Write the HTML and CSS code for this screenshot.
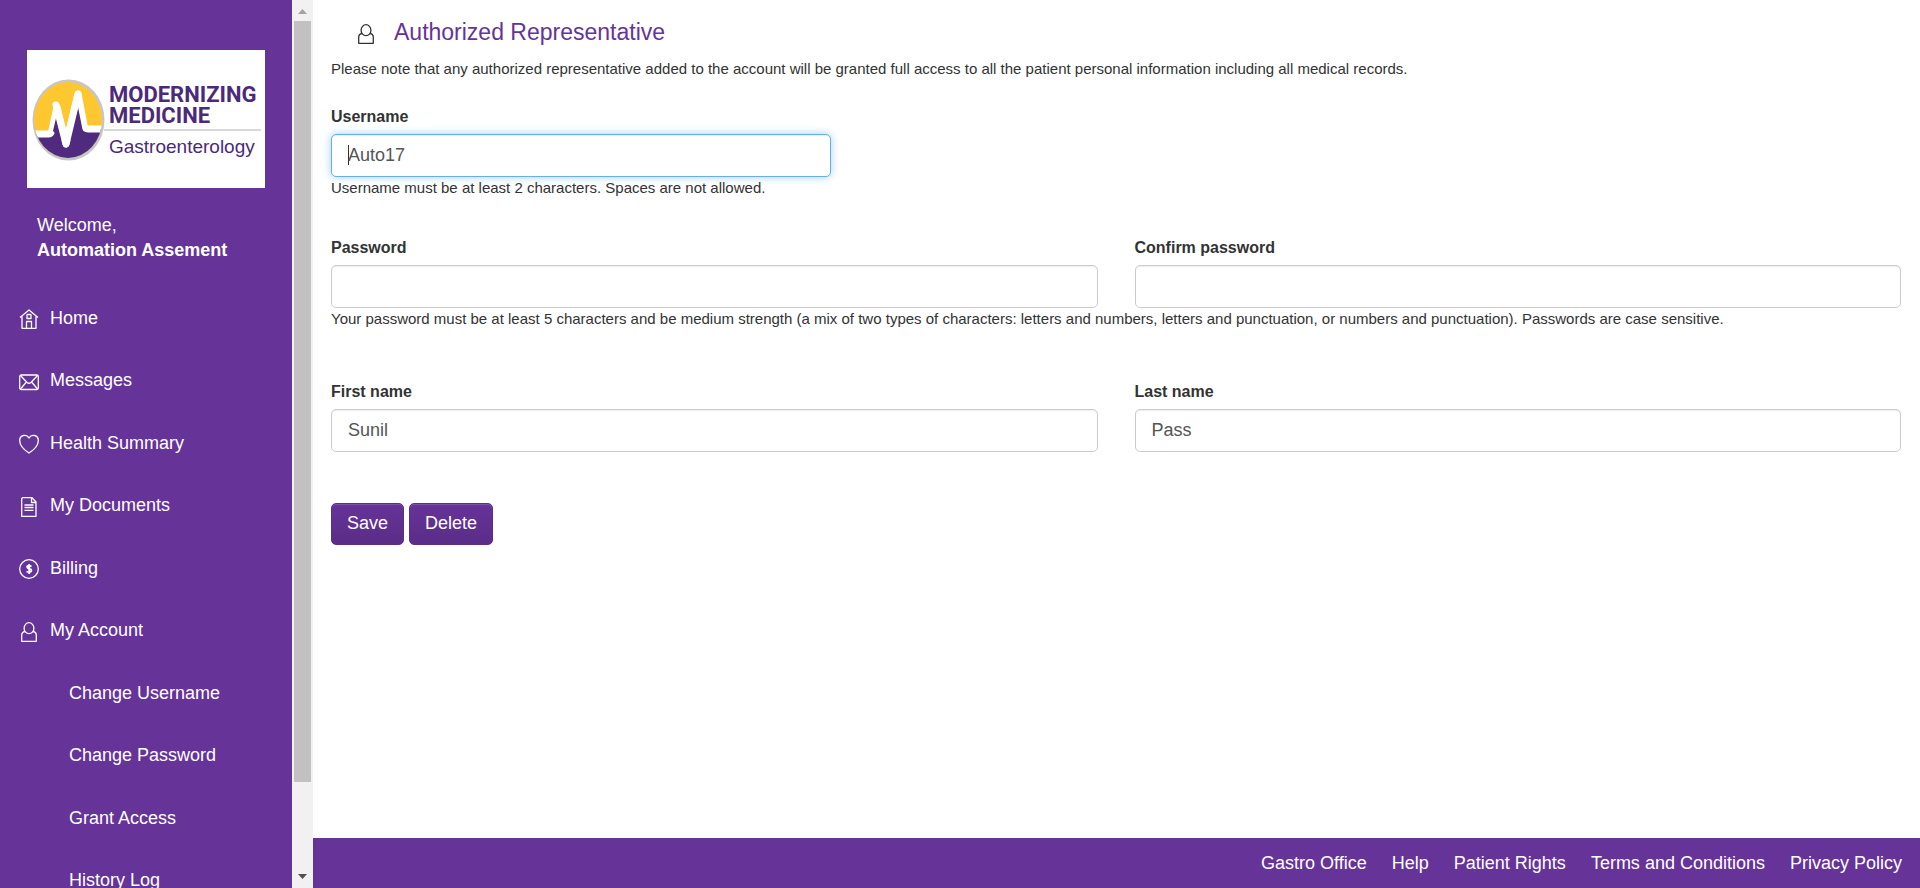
FILE: index.html
```html
<!DOCTYPE html>
<html lang="en">
<head>
<meta charset="utf-8">
<title>Authorized Representative</title>
<link rel="stylesheet" href="styles.css">
</head>
<body>
<div class="app">
  <aside class="sidebar">
    <div class="sidebar-content">
      <svg class="logo" viewBox="0 0 238 138" role="img" aria-label="Modernizing Medicine Gastroenterology">
        <defs><clipPath id="disc"><ellipse cx="41" cy="70" rx="34" ry="38"/></clipPath></defs>
        <rect width="238" height="138" fill="#fff"/>
        <ellipse cx="41.500" cy="70" rx="36" ry="40.500" fill="#c5c5ca"/>
        <g clip-path="url(#disc)">
          <rect x="5" y="30" width="75" height="80" fill="#ffc72f"/>
          <path d="M5 84H24L30 62L39 94L50 56L56 79H80V112H5Z" fill="#4f2a7f"/>
          <path d="M5 84H22Q24 84 25 80L30 57L39 94L51 44L57 75Q58 79 61 79H80" fill="none" stroke="#fff" stroke-width="7" stroke-linejoin="round"/>
          <path d="M26 81L30 64L37 93ZM42 91L51 57L56 82Z" fill="#4f2a7f"/>
          <path d="M29 55L39 94L51 44" fill="none" stroke="#fff" stroke-width="7" stroke-linecap="round" stroke-linejoin="round"/>
        </g>
        <path d="M77 80H234" stroke="#d8d8dc" stroke-width="2"/>
        <text class="logo-name" x="82" y="52">MODERNIZING</text>
        <text class="logo-name" x="82" y="73">MEDICINE</text>
        <text class="logo-field" x="82" y="103">Gastroenterology</text>
      </svg>
      <p class="welcome">Welcome,<br><strong>Automation Assement</strong></p>
      <nav class="nav">
        <a class="nav-item" href="#"><svg class="icon" viewBox="0 0 20 20"><path d="M1 8.500L10 1L19 8.500M3 7.500V19.300H17V7.500M7.500 19V12.500H12.500V19M8.500 5.500H11.500L12 6V9.500H8V6Z"/></svg>Home</a>
        <a class="nav-item" href="#"><svg class="icon" viewBox="0 0 20 20"><rect x=".7" y="3" width="18.600" height="14.500" rx="1.500"/><path d="M1.500 3.500L8 10.500Q10 12 12 10.500L18.500 3.500M1.500 17L7 10.500M18.500 17L13 10.500"/></svg>Messages</a>
        <a class="nav-item" href="#"><svg class="icon" viewBox="0 0 20 20"><path d="M10 19C6 16.500.7 12 .7 6.500C.7 1 7.500-.5 10 4C12.500-.5 19.300 1 19.300 6.500C19.300 12 14 16.500 10 19Z"/></svg>Health Summary</a>
        <a class="nav-item" href="#"><svg class="icon" viewBox="0 0 20 20"><path d="M3.500.7H13L17 5V19.300H2.700V1.500ZM12.500 1V5.500H17M5.500 8H14.500M5.500 10.500H14.500M5.500 13.300H14.500"/></svg>My Documents</a>
        <a class="nav-item" href="#"><svg class="icon" viewBox="0 0 20 20"><circle cx="10" cy="10" r="9.300"/><path class="dollar" d="M12.500 7.500Q10 6 8.500 7C7.500 8 8.500 9.300 10 9.700C12 10 13 11 12 12.500Q10.500 13.700 7.500 12.500M10.200 5V15"/></svg>Billing</a>
        <a class="nav-item" href="#"><svg class="icon" viewBox="0 0 20 20"><ellipse cx="10" cy="6.200" rx="4.900" ry="5.500"/><path d="M6 9.500Q2.700 10 2.700 13.500V19.300H17.300V13.500Q17.300 10 14 9.500"/></svg>My Account</a>
        <a class="nav-item nav-sub" href="#">Change Username</a>
        <a class="nav-item nav-sub" href="#">Change Password</a>
        <a class="nav-item nav-sub" href="#">Grant Access</a>
        <a class="nav-item nav-sub" href="#">History Log</a>
      </nav>
    </div>
    <div class="scrollbar" aria-hidden="true">
      <svg class="arrow arrow-up" viewBox="0 0 21 21"><path d="M6 14L10.500 9L15 14Z"/></svg>
      <div class="track"><div class="thumb"></div></div>
      <svg class="arrow" viewBox="0 0 21 21"><path d="M6 7L10.500 12L15 7Z"/></svg>
    </div>
  </aside>
  <div class="page">
    <main class="main">
      <h1 class="title"><svg class="icon title-icon" viewBox="0 0 20 20"><ellipse cx="10" cy="6.200" rx="4.900" ry="5.500"/><path d="M6 9.500Q2.700 10 2.700 13.500V19.300H17.300V13.500Q17.300 10 14 9.500"/></svg>Authorized Representative</h1>
      <p class="note">Please note that any authorized representative added to the account will be granted full access to all the patient personal information including all medical records.</p>
      <form class="form">
        <div class="row">
          <div class="field field-short">
            <label class="label" for="username">Username</label>
            <div class="control"><input class="input input-active" id="username" type="text" value="Auto17"><span class="caret"></span></div>
          </div>
          <p class="help">Username must be at least 2 characters. Spaces are not allowed.</p>
        </div>
        <div class="row row-wide">
          <div class="field">
            <label class="label" for="password">Password</label>
            <input class="input" id="password" type="password">
          </div>
          <div class="field">
            <label class="label" for="confirm">Confirm password</label>
            <input class="input" id="confirm" type="password">
          </div>
          <p class="help">Your password must be at least 5 characters and be medium strength (a mix of two types of characters: letters and numbers, letters and punctuation, or numbers and punctuation). Passwords are case sensitive.</p>
        </div>
        <div class="row row-wide">
          <div class="field">
            <label class="label" for="first">First name</label>
            <input class="input" id="first" type="text" value="Sunil">
          </div>
          <div class="field">
            <label class="label" for="last">Last name</label>
            <input class="input" id="last" type="text" value="Pass">
          </div>
        </div>
        <div class="actions">
          <button class="button" type="button">Save</button>
          <button class="button" type="button">Delete</button>
        </div>
      </form>
    </main>
    <footer class="footer">
      <a href="#">Gastro Office</a>
      <a href="#">Help</a>
      <a href="#">Patient Rights</a>
      <a href="#">Terms and Conditions</a>
      <a href="#">Privacy Policy</a>
    </footer>
  </div>
</div>
</body>
</html>
```
FILE: styles.css
```css
* {
  box-sizing: border-box;
}

body {
  margin: 0;
  background: #fff;
  color: #333;
  font-family: "Liberation Sans", Arial, sans-serif;
  font-size: 15px;
  line-height: 20px;
}

p,
h1 {
  margin: 0;
}

.app {
  display: flex;
  height: 100vh;
}

.sidebar {
  display: flex;
  flex: none;
  width: 313px;
  background: #663399;
  overflow: hidden;
}

.sidebar-content {
  flex: 1;
  padding-top: 50px;
  color: #fff;
  font-size: 18px;
  line-height: 25px;
}

.logo {
  display: block;
  width: 238px;
  height: 138px;
  margin-left: 27px;
}

.logo-name {
  fill: #4b2a7b;
  font: bold 22px Roboto, sans-serif;
}

.logo-field {
  fill: #4b2a7b;
  font: 19px "Liberation Sans", Arial, sans-serif;
}

.welcome {
  padding: 25px 37px 0;
}

.nav {
  display: flex;
  flex-direction: column;
  height: 625px;
  margin-top: 24px;
}

.nav-item {
  display: flex;
  flex: 1;
  align-items: center;
  gap: 11px;
  padding-left: 19px;
  color: #fff;
  text-decoration: none;
}

.nav-sub {
  padding-left: 69px;
}

.icon {
  width: 20px;
  height: 20px;
  margin-top: 2px;
  fill: none;
  stroke: currentColor;
  stroke-width: 1.300;
  stroke-linejoin: round;
}

.dollar {
  stroke-width: 1.800;
}

.scrollbar {
  display: flex;
  flex-direction: column;
  width: 21px;
  background: #f1f1f1;
}

.arrow {
  width: 21px;
  height: 21px;
  fill: #505050;
}

.arrow-up {
  fill: #a3a3a3;
}

.track {
  flex: 1;
  padding: 0 2px;
}

.thumb {
  height: 90%;
  background: #c1c1c1;
}

.page {
  display: flex;
  flex: 1;
  flex-direction: column;
  min-width: 0;
}

.main {
  flex: 1;
  padding: 18px 19px 0 18px;
}

.title {
  display: flex;
  align-items: center;
  gap: 18px;
  padding-left: 25px;
  color: #663399;
  font-size: 23px;
  font-weight: normal;
  line-height: 28px;
}

.title-icon {
  color: #333;
  margin-top: 4px;
}

.note {
  margin-top: 13px;
}

.form {
  margin-top: 27px;
}

.row {
  display: grid;
  grid-template-columns: 1fr 1fr;
  column-gap: 37px;
  margin-bottom: 38px;
}

.row-wide {
  margin-bottom: 51px;
}

.field {
  display: flex;
  flex-direction: column;
}

.field-short {
  grid-column: 1 / -1;
  max-width: 500px;
}

.label {
  margin-bottom: 6px;
  font-size: 16px;
  font-weight: bold;
  line-height: 22px;
}

.control {
  position: relative;
}

.input {
  display: block;
  width: 100%;
  height: 43px;
  padding: 0 16px;
  border: 1px solid #ccc;
  border-radius: 5px;
  background: #fff;
  box-shadow: inset 0 1px 1px rgba(0, 0, 0, 0.075);
  color: #555;
  font-family: inherit;
  font-size: 18px;
  outline: none;
}

.input-active {
  border-color: #66afe9;
  box-shadow: inset 0 1px 1px rgba(0, 0, 0, 0.075), 0 0 8px rgba(102, 175, 233, 0.6);
}

.caret {
  position: absolute;
  top: 11px;
  left: 17px;
  width: 1px;
  height: 20px;
  background: #333;
}

.help {
  grid-column: 1 / -1;
  line-height: 22px;
}

.actions {
  display: flex;
  gap: 5px;
}

.button {
  height: 42px;
  padding: 0 15px 2px;
  border: 1px solid #5c2e8a;
  border-radius: 5px;
  background: linear-gradient(#663399, #5a2d87);
  box-shadow: inset 0 1px 0 rgba(255, 255, 255, 0.15);
  color: #fff;
  font-family: inherit;
  font-size: 18px;
}

.footer {
  display: flex;
  flex: none;
  justify-content: flex-end;
  gap: 25px;
  padding: 13px 18px 12px;
  background: #663399;
  font-size: 18px;
  line-height: 25px;
}

.footer a {
  color: #fff;
  text-decoration: none;
}
```
